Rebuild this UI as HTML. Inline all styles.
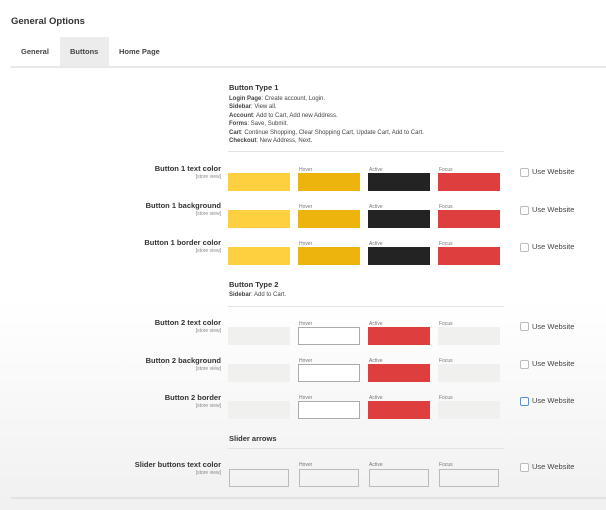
<!DOCTYPE html><html><head><style>
*{margin:0;padding:0;box-sizing:border-box}
body{width:606px;height:510px;overflow:hidden;font-family:"Liberation Sans",sans-serif;color:#333;position:relative;background:linear-gradient(#fff 0,#fff 300px,#f1f1f1 500px)}
.a{position:absolute;white-space:nowrap}
.t{font-size:9px;font-weight:bold;color:#333}
.lb{font-size:7.5px;font-weight:bold;color:#333;text-align:right;width:200px;left:21px}
.sv{font-size:5px;color:#888;text-align:right;width:200px;left:21px}
.sw{position:absolute;width:62px;height:18px}
.sm{font-size:5px;color:#777;position:absolute}
.cb{position:absolute;left:520px;width:9px;height:9px;border:1px solid #bbb;border-radius:2px;background:#fff}
.uw{position:absolute;left:532px;font-size:7.5px;color:#444}
.d{font-size:6px;color:#444;line-height:8.4px}
.hr{position:absolute;height:1px;background:#e3e3e3}
</style></head><body>
<div class="a t" style="left:11px;top:16px;font-size:9.5px">General Options</div>
<div class="a" style="left:60px;top:37px;width:49px;height:30px;background:#ececec"></div>
<div class="a" style="left:21px;top:47px;font-size:7.5px;font-weight:bold;color:#444">General</div>
<div class="a" style="left:70px;top:47px;font-size:7.5px;font-weight:bold;color:#444">Buttons</div>
<div class="a" style="left:119px;top:47px;font-size:7.5px;font-weight:bold;color:#444">Home Page</div>
<div class="hr" style="left:11px;top:66px;width:595px;height:2px;background:#e8e8e8"></div>

<div class="a t" style="left:229px;top:83px;font-size:7.5px">Button Type 1</div>
<div class="a d" style="left:229px;top:95px"><b>Login Page</b>: Create account, Login.<br><b>Sidebar</b>: View all.<br><b>Account</b>: Add to Cart, Add new Address.<br><b>Forms</b>: Save, Submit.<br><b>Cart</b>: Continue Shopping, Clear Shopping Cart, Update Cart, Add to Cart.<br><b>Checkout</b>: New Address, Next.</div>
<div class="hr" style="left:228px;top:151px;width:276px"></div>

<div class="a t" style="left:229px;top:280px;font-size:7.5px">Button Type 2</div>
<div class="a d" style="left:229px;top:291px"><b>Sidebar</b>: Add to Cart.</div>
<div class="hr" style="left:228px;top:306px;width:276px"></div>

<div class="a t" style="left:229px;top:434px;font-size:7.5px">Slider arrows</div>
<div class="hr" style="left:228px;top:448px;width:276px"></div>

<div class="hr" style="left:11px;top:497px;width:595px;height:2px;background:#e2e2e2"></div>

<!-- rows -->
<div id="rows"></div>
<div class="a lb" style="top:164px">Button 1 text color</div><div class="a sv" style="top:174px">[store view]</div>
<div class="sw" style="left:228px;top:173px;background:#fecf3f"></div><div class="sw" style="left:298px;top:173px;background:#ecb40c"></div><div class="sw" style="left:368px;top:173px;background:#232323"></div><div class="sw" style="left:438px;top:173px;background:#de3e3e"></div>
<div class="sm" style="left:299px;top:167px">Hover</div><div class="sm" style="left:369px;top:167px">Active</div><div class="sm" style="left:439px;top:167px">Focus</div>
<div class="cb" style="top:168px"></div><div class="uw" style="top:167px">Use Website</div>

<div class="a lb" style="top:201px">Button 1 background</div><div class="a sv" style="top:211px">[store view]</div>
<div class="sw" style="left:228px;top:210px;background:#fecf3f"></div><div class="sw" style="left:298px;top:210px;background:#ecb40c"></div><div class="sw" style="left:368px;top:210px;background:#232323"></div><div class="sw" style="left:438px;top:210px;background:#de3e3e"></div>
<div class="sm" style="left:299px;top:204px">Hover</div><div class="sm" style="left:369px;top:204px">Active</div><div class="sm" style="left:439px;top:204px">Focus</div>
<div class="cb" style="top:206px"></div><div class="uw" style="top:205px">Use Website</div>

<div class="a lb" style="top:238px">Button 1 border color</div><div class="a sv" style="top:248px">[store view]</div>
<div class="sw" style="left:228px;top:247px;background:#fecf3f"></div><div class="sw" style="left:298px;top:247px;background:#ecb40c"></div><div class="sw" style="left:368px;top:247px;background:#232323"></div><div class="sw" style="left:438px;top:247px;background:#de3e3e"></div>
<div class="sm" style="left:299px;top:241px">Hover</div><div class="sm" style="left:369px;top:241px">Active</div><div class="sm" style="left:439px;top:241px">Focus</div>
<div class="cb" style="top:243px"></div><div class="uw" style="top:242px">Use Website</div>

<div class="a lb" style="top:318px">Button 2 text color</div><div class="a sv" style="top:328px">[store view]</div>
<div class="sw" style="left:228px;top:327px;background:#f0f0ef"></div><div class="sw" style="left:298px;top:327px;background:#fff;border:1px solid #aaa"></div><div class="sw" style="left:368px;top:327px;background:#de3e3e"></div><div class="sw" style="left:438px;top:327px;background:#f0f0ef"></div>
<div class="sm" style="left:299px;top:321px">Hover</div><div class="sm" style="left:369px;top:321px">Active</div><div class="sm" style="left:439px;top:321px">Focus</div>
<div class="cb" style="top:322px"></div><div class="uw" style="top:322px">Use Website</div>

<div class="a lb" style="top:356px">Button 2 background</div><div class="a sv" style="top:366px">[store view]</div>
<div class="sw" style="left:228px;top:364px;background:#f0f0ef"></div><div class="sw" style="left:298px;top:364px;background:#fff;border:1px solid #aaa"></div><div class="sw" style="left:368px;top:364px;background:#de3e3e"></div><div class="sw" style="left:438px;top:364px;background:#f0f0ef"></div>
<div class="sm" style="left:299px;top:358px">Hover</div><div class="sm" style="left:369px;top:358px">Active</div><div class="sm" style="left:439px;top:358px">Focus</div>
<div class="cb" style="top:360px"></div><div class="uw" style="top:359px">Use Website</div>

<div class="a lb" style="top:393px">Button 2 border</div><div class="a sv" style="top:403px">[store view]</div>
<div class="sw" style="left:228px;top:401px;background:#f0f0ef"></div><div class="sw" style="left:298px;top:401px;background:#fff;border:1px solid #aaa"></div><div class="sw" style="left:368px;top:401px;background:#de3e3e"></div><div class="sw" style="left:438px;top:401px;background:#f0f0ef"></div>
<div class="sm" style="left:299px;top:395px">Hover</div><div class="sm" style="left:369px;top:395px">Active</div><div class="sm" style="left:439px;top:395px">Focus</div>
<div class="cb" style="top:397px;border-color:#5a8fd8"></div><div class="uw" style="top:396px">Use Website</div>

<div class="a lb" style="top:460px">Slider buttons text color</div><div class="a sv" style="top:470px">[store view]</div>
<div class="sw" style="left:229px;top:469px;width:60px;border:1px solid #bbb"></div><div class="sw" style="left:299px;top:469px;width:60px;border:1px solid #bbb"></div><div class="sw" style="left:369px;top:469px;width:60px;border:1px solid #bbb"></div><div class="sw" style="left:439px;top:469px;width:60px;border:1px solid #bbb"></div>
<div class="sm" style="left:299px;top:462px">Hover</div><div class="sm" style="left:369px;top:462px">Active</div><div class="sm" style="left:439px;top:462px">Focus</div>
<div class="cb" style="top:463px"></div><div class="uw" style="top:462px">Use Website</div>
</body></html>
